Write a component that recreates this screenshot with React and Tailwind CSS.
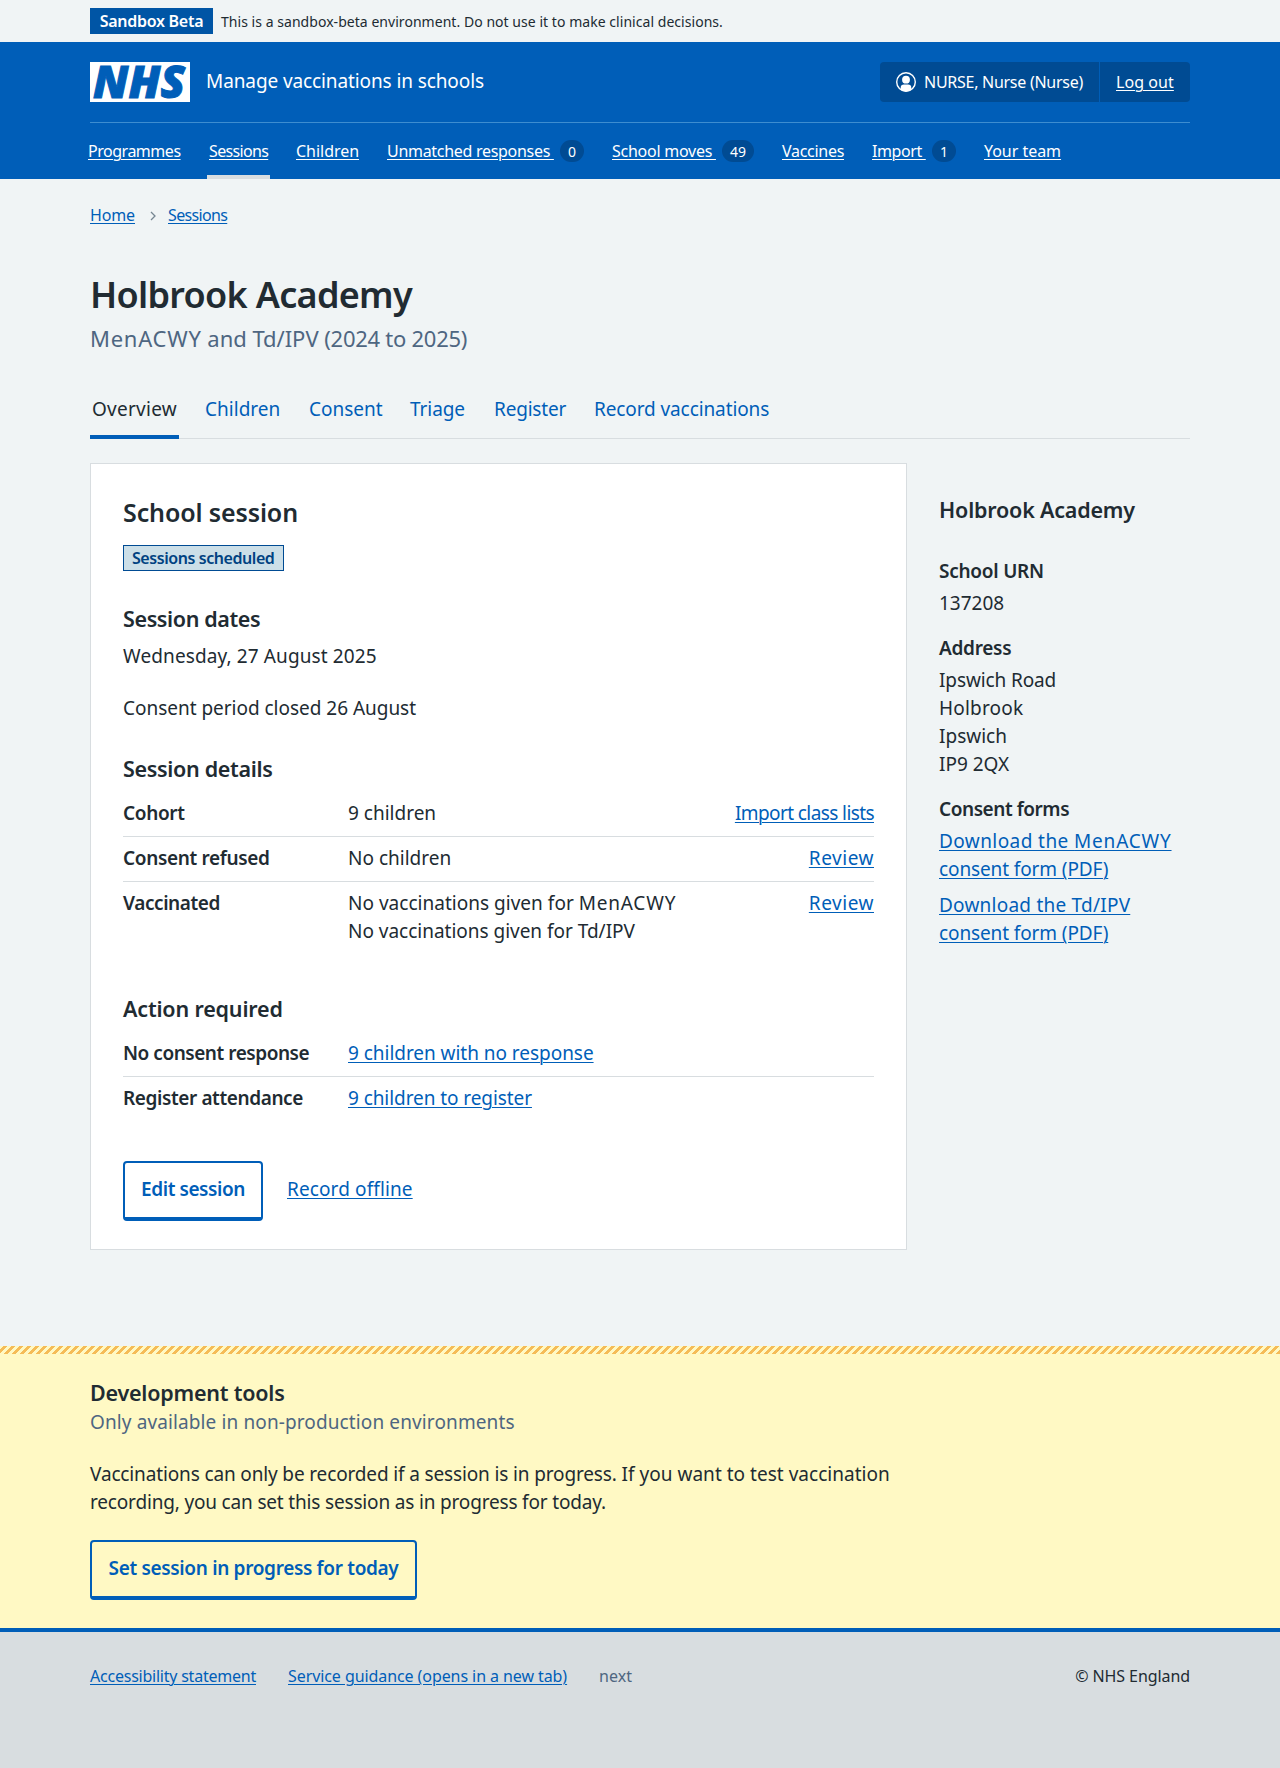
import React from "react";

const linkBlue = "text-[#005eb8] underline decoration-1 underline-offset-[2px]";

const NAV = [
  { label: "Programmes", cls: "tracking-[-0.030em] w-[93px]" },
  { label: "Sessions", cls: "tracking-[-0.041em] w-[59px]", active: true },
  { label: "Children", cls: "tracking-[-0.002em] w-[63px]" },
  { label: "Unmatched responses", cls: "tracking-[-0.0185em]", count: "0", box: "w-[197px]", badge: "w-[24px]" },
  { label: "School moves", cls: "tracking-[-0.016em]", count: "49", box: "w-[142px]", badge: "w-[32px]" },
  { label: "Vaccines", cls: "tracking-[-0.018em] w-[62px]" },
  { label: "Import", cls: "tracking-[-0.024em]", count: "1", box: "w-[84px]", badge: "w-[24px]" },
  { label: "Your team", cls: "tracking-[-0.002em] w-[77px]" },
];

const TABS = [
  { label: "Overview", cls: "w-[85px] tracking-[0.014em]", active: true },
  { label: "Children", cls: "w-[76px] tracking-[0.001em]" },
  { label: "Consent", cls: "w-[73px] tracking-[-0.001em]" },
  { label: "Triage", cls: "w-[56px] tracking-[-0.004em]" },
  { label: "Register", cls: "w-[72px] tracking-[-0.010em]" },
  { label: "Record vaccinations", cls: "tracking-[-0.0055em]" },
];

function NhsLogo() {
  return (
    <svg width="100" height="40" viewBox="0 0 100 40" className="block shrink-0 overflow-visible">
      <rect width="100" height="40" fill="#fff" />
      <text
        x="3"
        y="36"
        textLength="92"
        lengthAdjust="spacingAndGlyphs"
        fill="#005eb8"
        stroke="#005eb8"
        strokeWidth="1"
        className="font-['Open_Sans'] text-[45px] font-extrabold italic"
      >
        NHS
      </text>
    </svg>
  );
}

function UserIcon() {
  return (
    <svg width="20" height="20" viewBox="0 0 20 20" className="block shrink-0">
      <defs>
        <clipPath id="user-disc">
          <circle cx="10" cy="10" r="9.4" />
        </clipPath>
      </defs>
      <circle cx="10" cy="10" r="9.3" fill="none" stroke="#fff" strokeWidth="1.4" />
      <circle cx="10" cy="7.7" r="3.9" fill="#fff" />
      <path
        clipPath="url(#user-disc)"
        fill="#fff"
        d="M4.7 20v-4.200a3.300 3.300 0 0 1 3.300-3.300h4a3.300 3.300 0 0 1 3.300 3.300V20z"
      />
    </svg>
  );
}

function Header() {
  return (
    <header className="bg-[#005eb8] text-white">
      <div className="mx-[90px] flex items-center border-b border-[#3d8dd0] py-5">
        <NhsLogo />
        <span className="ml-4 pb-[2px] text-[19px] leading-7 tracking-[-0.0055em]">Manage vaccinations in schools</span>
        <div className="ml-auto flex h-10 rounded-[4px] bg-[#004b93] text-base leading-6">
          <div className="flex w-[220px] items-center gap-2 border-r border-[#005eb8] pl-4">
            <UserIcon />
            <span className="whitespace-nowrap tracking-[-0.017em]">NURSE, Nurse (Nurse)</span>
          </div>
          <div className="flex w-[90px] items-center pl-4">
            <a className="underline decoration-1 underline-offset-2 tracking-[0.004em]">Log out</a>
          </div>
        </div>
      </div>
      <nav className="mx-[84px] flex gap-5">
        {NAV.map((n) => (
          <div
            key={n.label}
            className={`flex h-14 items-start border-b-4 pt-4 text-base leading-6 ${n.count ? "pl-1" : "px-[2px] mx-[2px]"} ${n.active ? "border-[#d8dde0]" : "border-transparent"}`}
          >
            {n.count ? (
              <div className={`flex items-start justify-between ${n.box} mr-1`}>
                <a className={`whitespace-pre underline decoration-1 underline-offset-2 ${n.cls}`}>{n.label + " "}</a>
                <span className={`mt-[1px] h-[22px] rounded-full bg-[#004b93] text-center text-sm leading-[23px] ${n.badge}`}>
                  {n.count}
                </span>
              </div>
            ) : (
              <a className={`whitespace-nowrap underline decoration-1 underline-offset-2 ${n.cls}`}>{n.label}</a>
            )}
          </div>
        ))}
      </nav>
    </header>
  );
}

function SummaryRow({ label, cls, children, action, actionCls, last }) {
  return (
    <div className={`flex pt-[7px] pb-[9px] ${last ? "" : "border-b border-[#d8dde0]"}`}>
      <dt className={`w-[225px] shrink-0 font-semibold ${cls}`}>{label}</dt>
      <dd className="grow">{children}</dd>
      {action && <dd className={`whitespace-nowrap ${actionCls}`}><a className={linkBlue}>{action}</a></dd>}
    </div>
  );
}

function H3({ className, children }) {
  return <h3 className={`text-[21.5px] leading-[30px] font-semibold whitespace-nowrap ${className}`}>{children}</h3>;
}

function OutlineButton({ className, children }) {
  return (
    <button
      className={`h-[60px] rounded-[4px] border-2 border-b-4 border-[#005eb8] pt-[12px] pb-[14px] text-center leading-7 font-semibold whitespace-nowrap text-[#005eb8] ${className}`}
    >
      {children}
    </button>
  );
}

function SessionCard() {
  return (
    <section className="h-[787px] w-[817px] shrink-0 border border-[#d8dde0] bg-white px-8 pt-8">
      <h2 className="text-[25px] leading-8 font-semibold tracking-[-0.005em]">School session</h2>
      <div className="mt-[17px] flex">
        <strong className="h-[26px] w-[161px] border border-[#004b93] bg-[#ccdfe8] pl-[8px] text-base leading-6 font-semibold tracking-[-0.027em] whitespace-nowrap text-[#004281]">
          Sessions scheduled
        </strong>
      </div>
      <H3 className="mt-[33px] tracking-[-0.018em]">Session dates</H3>
      <p className="mt-[8px] tracking-[0.006em]">Wednesday, 27 August 2025</p>
      <p className="mt-6 tracking-[-0.0013em]">Consent period closed 26 August</p>
      <H3 className="mt-8 tracking-[-0.015em]">Session details</H3>
      <dl className="mt-2">
        <SummaryRow label="Cohort" cls="tracking-[-0.018em]" action="Import class lists" actionCls="tracking-[-0.031em]">
          <span>9 children</span>
        </SummaryRow>
        <SummaryRow label="Consent refused" cls="tracking-[-0.018em]" action="Review" actionCls="tracking-[0.028em]">
          <span>No children</span>
        </SummaryRow>
        <SummaryRow label="Vaccinated" cls="tracking-[-0.022em]" action="Review" actionCls="tracking-[0.028em]" last>
          <span className="block tracking-[0.001em]">
            No vaccinations given for <span className="tracking-[0.042em]">MenACWY</span>
          </span>
          <span className="block tracking-[-0.001em]">No vaccinations given for Td/IPV</span>
        </SummaryRow>
      </dl>
      <H3 className="mt-10 tracking-[-0.008em]">Action required</H3>
      <dl className="mt-2">
        <SummaryRow label="No consent response" cls="tracking-[-0.0245em]">
          <a className={`${linkBlue} tracking-[-0.002em]`}>9 children with no response</a>
        </SummaryRow>
        <SummaryRow label="Register attendance" cls="tracking-[-0.021em]" last>
          <a className={`${linkBlue} tracking-[-0.004em]`}>9 children to register</a>
        </SummaryRow>
      </dl>
      <div className="mt-10 flex items-start">
        <OutlineButton className="w-[140px] tracking-[-0.022em]">Edit session</OutlineButton>
        <a className={`${linkBlue} mt-[14px] ml-6 tracking-[0.006em]`}>Record offline</a>
      </div>
    </section>
  );
}

function Sidebar() {
  return (
    <aside className="ml-8 pt-8">
      <H3 className="tracking-[-0.009em]">Holbrook Academy</H3>
      <dl className="mt-8">
        <dt className="font-semibold tracking-[-0.013em]">School URN</dt>
        <dd className="mt-1">137208</dd>
        <dt className="mt-[17px] font-semibold tracking-[-0.015em]">Address</dt>
        <dd className="mt-1">
          <span className="block tracking-[-0.006em]">Ipswich Road</span>
          <span className="block tracking-[0.01em]">Holbrook</span>
          <span className="block">Ipswich</span>
          <span className="block">IP9 2QX</span>
        </dd>
        <dt className="mt-[17px] font-semibold tracking-[-0.0235em]">Consent forms</dt>
        <dd className="mt-1">
          <a className={`${linkBlue} block tracking-[0.022em]`}>
            Download the <span className="tracking-[0.042em]">MenACWY</span>
          </a>
          <a className={`${linkBlue} block tracking-[-0.006em]`}>consent form (PDF)</a>
        </dd>
        <dd className="mt-2">
          <a className={`${linkBlue} block tracking-[0.012em]`}>Download the Td/IPV</a>
          <a className={`${linkBlue} block tracking-[-0.006em]`}>consent form (PDF)</a>
        </dd>
      </dl>
    </aside>
  );
}

export default function App() {
  return (
    <div className="min-h-[1768px] bg-[#f0f4f5] font-['Noto_Sans','Open_Sans',sans-serif] text-[19px] leading-7 text-[#212b32]">
      <div className="flex h-[42px] items-center px-[90px]">
        <strong className="h-[26px] w-[123px] bg-[#0055a5] text-center text-base leading-[26px] font-semibold tracking-[-0.0175em] text-white">
          Sandbox Beta
        </strong>
        <span className="ml-2 pt-[2px] text-sm leading-6 tracking-[0.003em]">
          This is a sandbox-beta environment. Do not use it to make clinical decisions.
        </span>
      </div>
      <Header />
      <main className="mx-[90px]">
        <div className="flex items-center pt-6 text-base leading-6">
          <a className={`${linkBlue} w-[45px] tracking-[-0.008em]`}>Home</a>
          <svg width="6" height="10" viewBox="0 0 6 10" className="mt-[2px] ml-[15px]">
            <path d="M1 1l4 4-4 4" fill="none" stroke="#768692" strokeWidth="1.3" />
          </svg>
          <a className={`${linkBlue} ml-3 tracking-[-0.041em]`}>Sessions</a>
        </div>
        <h1 className="mt-[46px] text-[36px] leading-[44px] font-semibold tracking-[-0.0195em]">Holbrook Academy</h1>
        <p className="mt-[5px] text-[22px] leading-8 tracking-[-0.0015em] text-[#4e6681]">
          <span className="tracking-[0.034em]">MenACWY</span> and Td/IPV{" "}
          <span className="tracking-[-0.012em]">(2024 to 2025)</span>
        </p>
        <nav className="mt-10 flex h-[45px] gap-6 border-b border-[#d8dde0]">
          {TABS.map((t) => (
            <a
              key={t.label}
              className={`-mb-px border-b-4 px-[2px] pt-px whitespace-nowrap ${t.active ? "border-[#005eb8] text-[#212b32]" : "border-transparent text-[#005eb8]"}`}
            >
              <span className={`block ${t.cls}`}>{t.label}</span>
            </a>
          ))}
        </nav>
        <div className="mt-6 flex">
          <SessionCard />
          <Sidebar />
        </div>
      </main>
      <section className="mt-24 h-[282px] bg-[#fff9c4]">
        <div className="h-2 bg-[repeating-linear-gradient(-45deg,#f5bc57_0px,#f5bc57_2.828px,#fff9c4_2.828px,#fff9c4_5.657px)]" />
        <div className="px-[90px] pt-6">
          <H3 className="tracking-[-0.010em]">Development tools</H3>
          <p className="tracking-[0.006em] text-[#4e6681]">Only available in non-production environments</p>
          <p className="mt-6 tracking-[-0.0075em] whitespace-nowrap">
            Vaccinations can only be recorded if a session is in progress.{" "}
            <span className="tracking-[0.0013em]">If you want to test vaccination</span>
            <br />
            <span className="tracking-[-0.009em]">recording, you can set this session as in progress for today.</span>
          </p>
          <OutlineButton className="mt-6 w-[327px] tracking-[-0.0175em]">Set session in progress for today</OutlineButton>
        </div>
      </section>
      <footer className="flex h-[140px] border-t-4 border-[#005eb8] bg-[#d8dde0] px-[90px] pt-8 text-base leading-6">
        <a className={`${linkBlue} tracking-[-0.0143em]`}>Accessibility statement</a>
        <a className={`${linkBlue} ml-8 tracking-[-0.005em]`}>Service guidance (opens in a new tab)</a>
        <span className="ml-8 text-[#4e6681]">next</span>
        <span className="ml-auto tracking-[-0.005em]">© NHS England</span>
      </footer>
    </div>
  );
}
